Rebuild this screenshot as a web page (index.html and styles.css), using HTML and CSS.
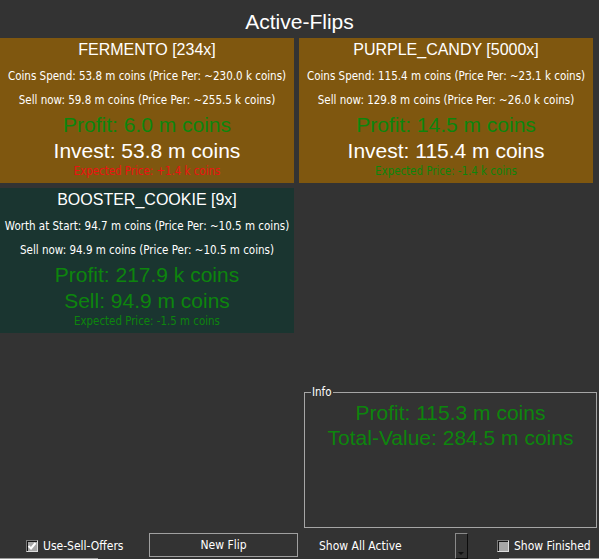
FILE: index.html
```html
<!DOCTYPE html>
<html>
<head>
<meta charset="utf-8">
<title>Active-Flips</title>
<link rel="stylesheet" href="styles.css">
</head>
<body>
<div class="app">
  <div class="header">Active-Flips</div>
  <div class="main">
    <div class="cards">
      <div class="card brown">
        <div class="c-title">FERMENTO [234x]</div>
        <div class="c-line first">Coins Spend: 53.8 m coins (Price Per: ~230.0 k coins)</div>
        <div class="c-line">Sell now: 59.8 m coins (Price Per: ~255.5 k coins)</div>
        <div class="c-big green">Profit: 6.0 m coins</div>
        <div class="c-big">Invest: 53.8 m coins</div>
        <div class="c-exp red">Expected Price: +1.4 k coins</div>
      </div>
      <div class="card brown">
        <div class="c-title">PURPLE_CANDY [5000x]</div>
        <div class="c-line first">Coins Spend: 115.4 m coins (Price Per: ~23.1 k coins)</div>
        <div class="c-line">Sell now: 129.8 m coins (Price Per: ~26.0 k coins)</div>
        <div class="c-big green">Profit: 14.5 m coins</div>
        <div class="c-big">Invest: 115.4 m coins</div>
        <div class="c-exp green">Expected Price: -1.4 k coins</div>
      </div>
      <div class="card teal">
        <div class="c-title">BOOSTER_COOKIE [9x]</div>
        <div class="c-line first">Worth at Start: 94.7 m coins (Price Per: ~10.5 m coins)</div>
        <div class="c-line">Sell now: 94.9 m coins (Price Per: ~10.5 m coins)</div>
        <div class="c-big green">Profit: 217.9 k coins</div>
        <div class="c-big green">Sell: 94.9 m coins</div>
        <div class="c-exp green">Expected Price: -1.5 m coins</div>
      </div>
    </div>
    <fieldset class="info">
      <legend>Info</legend>
      <div class="info-line first">Profit: 115.3 m coins</div>
      <div class="info-line">Total-Value: 284.5 m coins</div>
    </fieldset>
  </div>
  <div class="bottom">
    <div class="cell cell-sell">
      <span class="chk checked"><svg width="10" height="10" viewBox="0 0 10 10"><path d="M1.5 5 L4 7.5 L8.5 2" fill="none" stroke="#ffffff" stroke-width="2"/></svg></span>
      <span class="lbl">Use-Sell-Offers</span>
    </div>
    <div class="cell cell-btn">
      <button class="btn">New Flip</button>
    </div>
    <div class="cell cell-combo">
      <span class="lbl">Show All Active</span>
      <span class="drop"><svg width="11" height="24" viewBox="0 0 11 24"><path d="M2 18 L8 18 L5 21 Z" fill="#111111"/></svg></span>
    </div>
    <div class="cell cell-fin">
      <span class="chk"></span>
      <span class="lbl">Show Finished</span>
    </div>
  </div>
</div>
</body>
</html>
```

FILE: styles.css
```css
html, body {
  margin: 0;
  padding: 0;
  background: #333333;
}
body {
  width: 599px;
  height: 559px;
  overflow: hidden;
  color: #ffffff;
  font-family: "Liberation Sans", Arial, sans-serif;
}
.app {
  display: flex;
  flex-direction: column;
  height: 559px;
}
.header {
  height: 38px;
  box-sizing: border-box;
  padding-top: 6px;
  line-height: 32px;
  font-size: 21px;
  text-align: center;
  color: #ffffff;
}
.main {
  flex: 1;
  display: flex;
  flex-direction: column;
}
.cards {
  display: grid;
  grid-template-columns: 294px 294px;
  grid-auto-rows: 145px;
  gap: 5px;
}
.card {
  text-align: center;
  white-space: nowrap;
  overflow: hidden;
}
.brown { background: #7f570f; }
.teal { background: #1a3530; }
.c-title {
  font-size: 16px;
  line-height: 24px;
}
.c-line {
  font-family: "DejaVu Sans Condensed", "DejaVu Sans", sans-serif;
  font-stretch: condensed;
  font-size: 11.5px;
  line-height: 24px;
}
.c-line.first { margin-top: 2px; }
.c-big {
  font-size: 21px;
  line-height: 26px;
}
.c-exp {
  font-family: "DejaVu Sans Condensed", "DejaVu Sans", sans-serif;
  font-stretch: condensed;
  font-size: 11.4px;
  line-height: 14px;
}
.green { color: #0d850d; }
.red { color: #ee1111; }

.info {
  margin: auto 2px 5px 304px;
  padding: 0 6px;
  box-sizing: border-box;
  height: 142px;
  border: 1px solid #a6a6a6;
  min-width: 0;
}
.info legend {
  padding: 0 1px;
  font-family: "DejaVu Sans Condensed", "DejaVu Sans", sans-serif;
  font-stretch: condensed;
  font-size: 11.5px;
  line-height: 12px;
  color: #ffffff;
}
.info-line {
  font-size: 21px;
  line-height: 25px;
  text-align: center;
  color: #0d850d;
  white-space: nowrap;
}
.info-line.first { margin-top: 2px; }

.bottom {
  height: 26px;
  display: grid;
  grid-template-columns: 149px 149px 171px 1fr;
}
.cell {
  display: flex;
  align-items: center;
  font-family: "DejaVu Sans Condensed", "DejaVu Sans", sans-serif;
  font-stretch: condensed;
  font-size: 12px;
  color: #ffffff;
  background-repeat: no-repeat;
}
.cell-sell {
  padding-left: 26px;
  gap: 5px;
  background-image: linear-gradient(#9c9c9c, #9c9c9c);
  background-size: 98px 1px;
  background-position: 0 25px;
}
.cell-fin {
  padding-left: 28px;
  gap: 5px;
  background-image: linear-gradient(#9c9c9c, #9c9c9c);
  background-size: 100px 1px;
  background-position: 30px 25px;
}
.chk {
  box-sizing: border-box;
  width: 12px;
  height: 12px;
  margin-top: -1px;
  border-top: 1px solid #7a7a7a;
  border-left: 1px solid #7a7a7a;
  border-right: 1px solid #dcdcdc;
  border-bottom: 1px solid #dcdcdc;
  box-shadow: inset 1px 1px 0 #141414;
  background: #a6a6a6;
  display: flex;
  align-items: center;
  justify-content: center;
}
.chk svg { display: block; }
.cell-btn {
  align-items: flex-start;
}
.btn {
  width: 149px;
  height: 24px;
  margin: 0;
  padding: 0;
  background: #333333;
  border: 1px solid #a0a0a0;
  color: #ffffff;
  font-family: "DejaVu Sans Condensed", "DejaVu Sans", sans-serif;
  font-stretch: condensed;
  font-size: 12px;
}
.cell-combo {
  padding-left: 21px;
  justify-content: space-between;
  padding-right: 1px;
}
.drop {
  box-sizing: border-box;
  width: 13px;
  height: 26px;
  align-self: flex-start;
  border-top: 1px solid #8a8a8a;
  border-left: 1px solid #8a8a8a;
  border-right: 1px solid #0c0c0c;
  border-bottom: 1px solid #0c0c0c;
  background: #333333;
}
.drop svg { display: block; }
```
